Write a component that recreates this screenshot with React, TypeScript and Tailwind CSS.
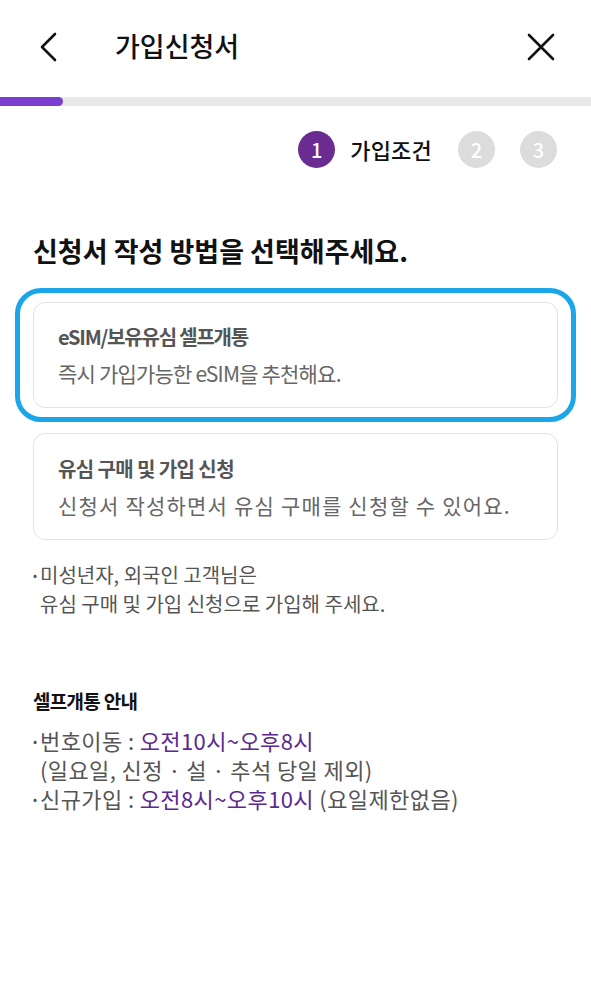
import React from 'react';

const font = { fontFamily: '"Noto Sans CJK KR", "Noto Sans", sans-serif' };

function Step({ n, active }: { n: number; active?: boolean }) {
  return (
    <div
      className={`w-[37px] h-[37px] rounded-full flex items-center justify-center text-[20px] font-medium text-white ${active ? 'bg-[#6a2c91]' : 'bg-[#dcdcdc]'}`}
    >
      {n}
    </div>
  );
}

function Bullet({ children }: { children: React.ReactNode }) {
  return (
    <div className="flex">
      <span className="w-[7px] shrink-0 text-[12px]">•</span>
      <div>{children}</div>
    </div>
  );
}

export default function App() {
  return (
    <div className="w-[591px] h-[1004px] bg-white text-[#111]" style={font}>
      {/* header */}
      <div className="h-[97px] pb-[4px] flex items-center px-[38px]">
        <svg width="20" height="30" viewBox="0 0 20 30" className="shrink-0">
          <path d="M17 2 L4 15 L17 28" fill="none" stroke="#111" strokeWidth="2.6" strokeLinecap="round" strokeLinejoin="round" />
        </svg>
        <h1 className="ml-[57px] text-[27px] font-medium">가입신청서</h1>
        <svg width="28" height="28" viewBox="0 0 28 28" className="ml-auto mr-[-2px]">
          <path d="M2 2 L26 26 M26 2 L2 26" fill="none" stroke="#111" strokeWidth="2.6" strokeLinecap="round" />
        </svg>
      </div>

      {/* progress */}
      <div className="h-[9px] bg-[#e8e8e8]">
        <div className="h-full w-[63px] bg-[#7a3fd0] rounded-r-full" />
      </div>

      {/* steps */}
      <div className="mt-[25px] h-[37px] flex items-center justify-end pr-[34px]">
        <Step n={1} active />
        <span className="ml-[15px] text-[22px] font-medium tracking-[0.2px]">가입조건</span>
        <div className="ml-[26px]"><Step n={2} /></div>
        <div className="ml-[25px]"><Step n={3} /></div>
      </div>

      <h2 className="mt-[66px] px-[33px] text-[27px] leading-[34px] font-bold">
        신청서 작성 방법을 선택해주세요.
      </h2>

      {/* selected option */}
      <div className="mt-[20px] mx-[15px] border-[5px] border-[#1ba6ea] rounded-[26px] px-[13px] py-[9px]">
        <div className="h-[106px] border border-[#e2e2e2] rounded-[12px] px-[24px] flex flex-col justify-center gap-[8px]">
          <p className="text-[20px] leading-[28px] font-semibold text-[#555] tracking-[-1.2px]">eSIM/보유유심 셀프개통</p>
          <p className="text-[21px] leading-[28px] text-[#666] tracking-[-0.8px]">즉시 가입가능한 eSIM을 추천해요.</p>
        </div>
      </div>

      <div className="mt-[11px] mx-[33px] h-[107px] border border-[#e2e2e2] rounded-[12px] px-[24px] flex flex-col justify-center gap-[8px]">
        <p className="text-[20px] leading-[28px] font-semibold text-[#555] tracking-[-0.6px]">유심 구매 및 가입 신청</p>
        <p className="text-[21px] leading-[28px] text-[#666] tracking-[1.2px]">신청서 작성하면서 유심 구매를 신청할 수 있어요.</p>
      </div>

      <div className="mt-[20px] px-[33px] text-[20px] leading-[29px] text-[#555]">
        <Bullet>
          미성년자, 외국인 고객님은
          <br />
          유심 구매 및 가입 신청으로 가입해 주세요.
        </Bullet>
      </div>

      <h3 className="mt-[69px] px-[33px] text-[19px] leading-[28px] font-bold tracking-[-0.7px]">셀프개통 안내</h3>

      <div className="mt-[11px] px-[33px] text-[22px] leading-[29px] text-[#555] tracking-[0.4px]">
        <Bullet>
          번호이동 : <span className="text-[#5a2a8f]">오전10시~오후8시</span>
          <br />
          (일요일, 신정 · 설 · 추석 당일 제외)
        </Bullet>
        <Bullet>
          신규가입 : <span className="text-[#5a2a8f]">오전8시~오후10시</span> (요일제한없음)
        </Bullet>
      </div>
    </div>
  );
}
